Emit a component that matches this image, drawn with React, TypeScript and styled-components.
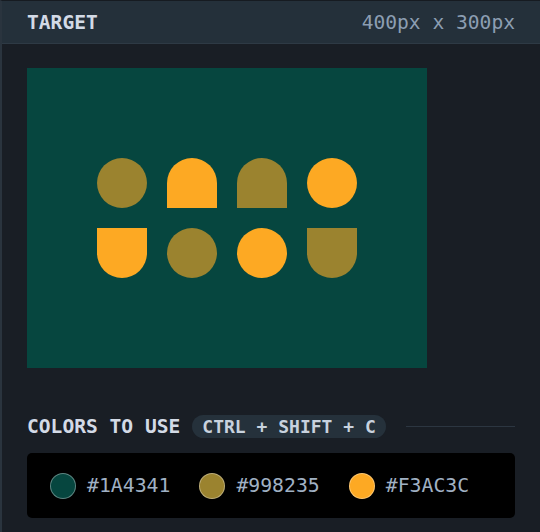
import React from "react";
import styled, { createGlobalStyle } from "styled-components";

const Global = createGlobalStyle`
  html, body { margin: 0; padding: 0; background: #191e25; }
  body { font-family: "DejaVu Sans Mono", "Liberation Mono", monospace; }
`;

const TEAL = "#06463f";
const OLIVE = "#9b832f";
const ORANGE = "#fda923";

const Panel = styled.div`
  width: 540px;
  height: 532px;
  box-sizing: border-box;
  background: #191e25;
  border-left: 2px solid #2a343e;
  border-top: 1px solid #161b21;
  display: flex;
  flex-direction: column;
  overflow: hidden;
`;

const Header = styled.div`
  height: 43px;
  flex: none;
  box-sizing: border-box;
  background: #24303a;
  border-bottom: 1px solid #2e3a45;
  display: flex;
  align-items: center;
  justify-content: space-between;
  padding: 0 25px 0 25px;
`;

const Title = styled.span`
  font-size: 19.6px;
  font-weight: bold;
  color: #d3dae6;
`;

const Size = styled.span`
  font-size: 19.6px;
  color: #8c9eb2;
`;

const Body = styled.div`
  padding: 24px 25px 0 25px;
  display: flex;
  flex-direction: column;
`;

const Canvas = styled.div`
  width: 400px;
  height: 300px;
  background: ${TEAL};
  display: grid;
  grid-template-columns: repeat(4, 50px);
  grid-auto-rows: 50px;
  gap: 20px;
  place-content: center;
`;

type ShapeKind = "circle" | "top" | "bottom";

const Shape = styled.div<{ $kind: ShapeKind; $color: string }>`
  width: 50px;
  height: 50px;
  background: ${(p) => p.$color};
  border-radius: ${(p) =>
    p.$kind === "circle" ? "50%" : p.$kind === "top" ? "25px 25px 0 0" : "0 0 25px 25px"};
`;

const ColorsRow = styled.div`
  margin-top: 47px;
  height: 23px;
  display: flex;
  align-items: center;
`;

const Label = styled.span`
  font-size: 19.6px;
  font-weight: bold;
  color: #d3dae6;
  margin-right: 12px;
`;

const Pill = styled.span`
  height: 23px;
  box-sizing: border-box;
  padding: 0 10px;
  border-radius: 12px;
  background: #25313b;
  display: flex;
  align-items: center;
  font-size: 18px;
  font-weight: bold;
  color: #c8d2de;
  white-space: nowrap;
`;

const Rule = styled.div`
  flex: 1;
  height: 1px;
  background: #2c3641;
  margin-left: 20px;
`;

const SwatchBox = styled.div`
  margin-top: 15px;
  height: 65px;
  background: #000;
  border-radius: 5px;
  display: flex;
  align-items: center;
  padding-left: 23px;
  gap: 29px;
`;

const Swatch = styled.div`
  display: flex;
  align-items: center;
  gap: 11px;
`;

const Dot = styled.span<{ $color: string }>`
  width: 26px;
  height: 26px;
  box-sizing: border-box;
  border-radius: 50%;
  background: ${(p) => p.$color};
  border: 1px solid rgba(255, 255, 255, 0.35);
`;

const Hex = styled.span`
  font-size: 19.8px;
  color: #a0b1c4;
`;

const shapes: { kind: ShapeKind; color: string }[] = [
  { kind: "circle", color: OLIVE },
  { kind: "top", color: ORANGE },
  { kind: "top", color: OLIVE },
  { kind: "circle", color: ORANGE },
  { kind: "bottom", color: ORANGE },
  { kind: "circle", color: OLIVE },
  { kind: "circle", color: ORANGE },
  { kind: "bottom", color: OLIVE },
];

const swatches = [
  { hex: "#1A4341", color: TEAL },
  { hex: "#998235", color: OLIVE },
  { hex: "#F3AC3C", color: ORANGE },
];

export default function App() {
  return (
    <>
      <Global />
      <Panel>
        <Header>
          <Title>TARGET</Title>
          <Size>400px x 300px</Size>
        </Header>
        <Body>
          <Canvas>
            {shapes.map((s, i) => (
              <Shape key={i} $kind={s.kind} $color={s.color} />
            ))}
          </Canvas>
          <ColorsRow>
            <Label>COLORS TO USE</Label>
            <Pill>CTRL + SHIFT + C</Pill>
            <Rule />
          </ColorsRow>
          <SwatchBox>
            {swatches.map((s) => (
              <Swatch key={s.hex}>
                <Dot $color={s.color} />
                <Hex>{s.hex}</Hex>
              </Swatch>
            ))}
          </SwatchBox>
        </Body>
      </Panel>
    </>
  );
}
